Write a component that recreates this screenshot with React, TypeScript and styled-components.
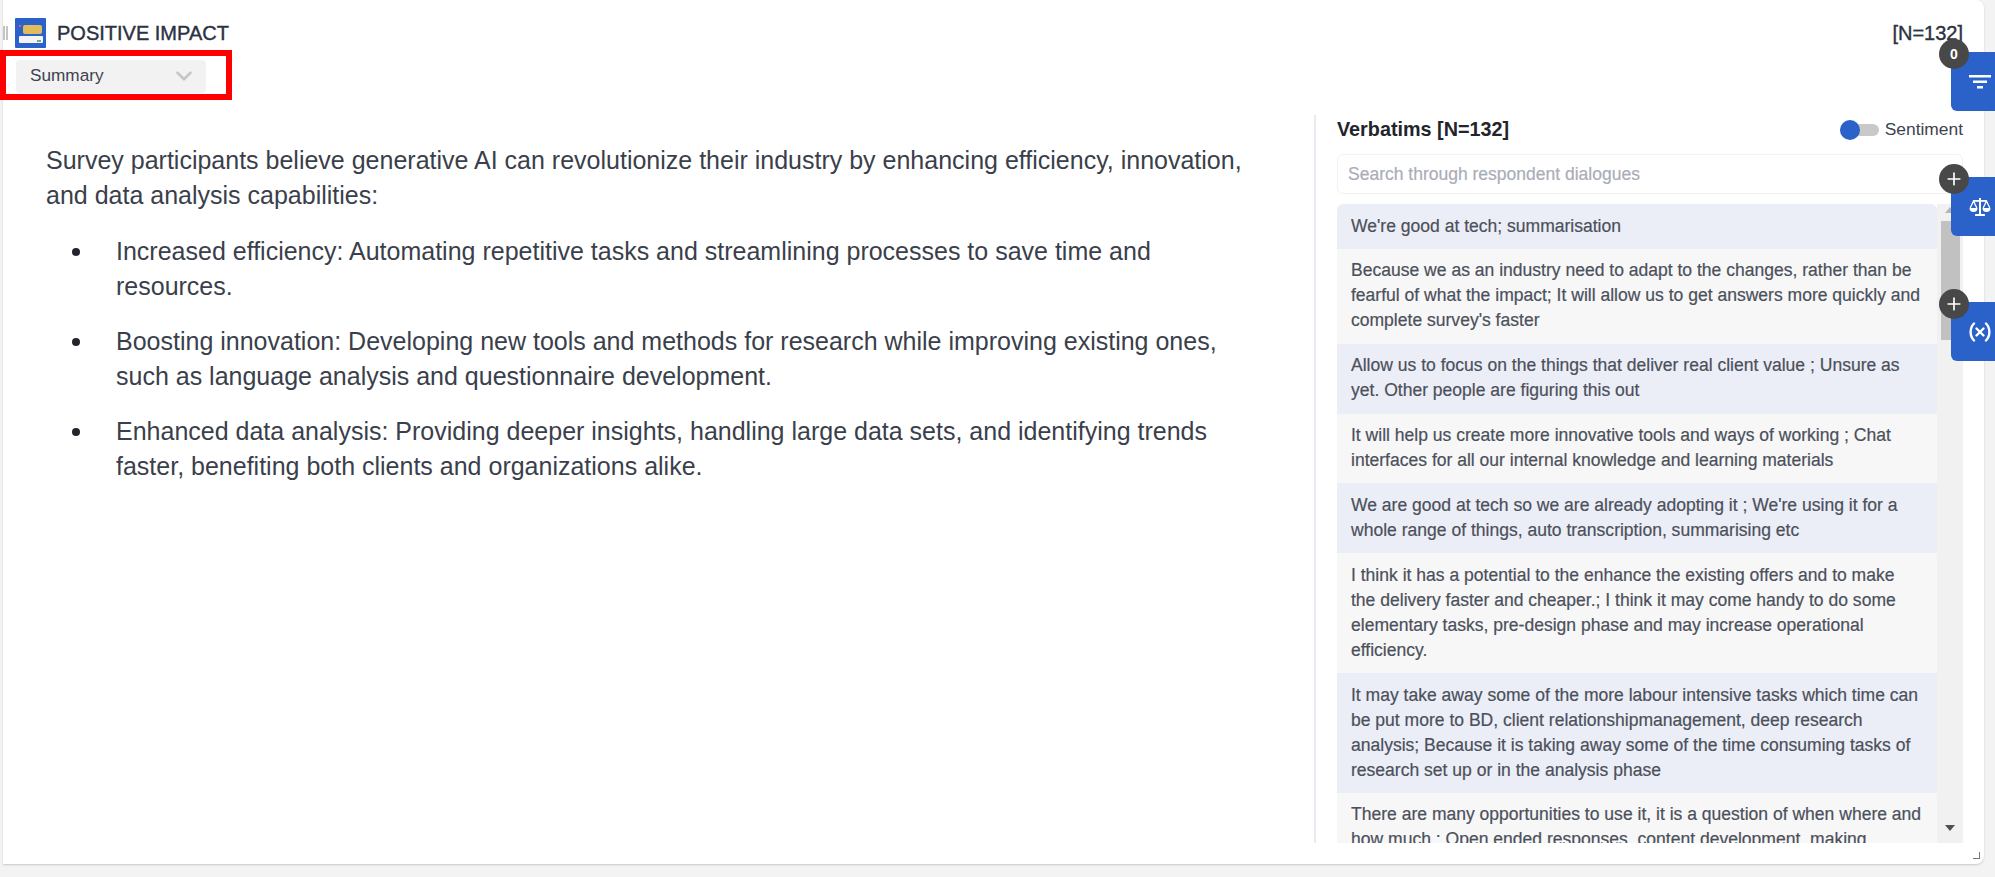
import React from "react";
import styled, { createGlobalStyle } from "styled-components";
import { ChevronDown, Plus } from "lucide-react";

const GlobalStyle = createGlobalStyle`
  html, body {
    margin: 0;
    padding: 0;
    background: #f3f3f3;
    font-family: "Liberation Sans", Arial, sans-serif;
    overflow: hidden;
  }
`;

const Page = styled.div`
  width: 1995px;
  height: 877px;
  box-sizing: border-box;
  padding-left: 3px;
  padding-right: 11px;
  padding-bottom: 13px;
  background: #f3f3f3;
  position: relative;
  overflow: hidden;
`;

const Card = styled.div`
  height: 100%;
  box-sizing: border-box;
  background: #fff;
  border-radius: 0 8px 8px 0;
  box-shadow: 0 1px 2px rgba(0, 0, 0, 0.18);
  padding: 18px 0 0 0;
  display: flex;
  flex-direction: column;
  position: relative;
`;

const Header = styled.div`
  display: flex;
  align-items: center;
  height: 30px;
  padding-right: 21px;
`;

const Grip = styled.div`
  width: 5px;
  height: 14px;
  margin-right: 7px;
  border-left: 2px solid #c4c4c4;
  border-right: 2px solid #c4c4c4;
  box-sizing: border-box;
`;

const Title = styled.h1`
  margin: 0 0 0 11px;
  font-size: 20px;
  font-weight: 400;
  color: #2c3242;
  -webkit-text-stroke: 0.4px #2c3242;
  flex: 1;
`;

const TotalCount = styled.span`
  font-size: 20px;
  color: #2c3242;
  -webkit-text-stroke: 0.4px #2c3242;
`;

const SelectRow = styled.div`
  padding: 12px 0 0 13px;
  height: 33px;
`;

const Select = styled.div`
  width: 190px;
  height: 33px;
  box-sizing: border-box;
  padding: 0 9px 2px 14px;
  background: #f2f2f2;
  border-radius: 4px;
  display: flex;
  align-items: center;
  justify-content: space-between;
  font-size: 17.2px;
  color: #3d4350;
`;

const Highlight = styled.div`
  position: absolute;
  left: -3px;
  top: 50px;
  width: 232px;
  height: 50px;
  border: 6px solid #ff0000;
  box-sizing: border-box;
  pointer-events: none;
`;

const Body = styled.div`
  flex: 1;
  min-height: 0;
  display: flex;
  margin-top: 22px;
  padding-bottom: 21px;
`;

const Summary = styled.div`
  width: 1311px;
  box-sizing: border-box;
  padding: 28px 70px 0 43px;
  font-size: 25px;
  line-height: 35px;
  color: #3a3f4b;
`;

const Intro = styled.p`
  margin: 0;
`;

const Points = styled.ul`
  margin: 21px 0 0;
  padding: 0 0 0 70px;
  list-style: none;
`;

const Point = styled.li`
  margin-bottom: 20px;
  position: relative;
  &::before {
    content: "";
    position: absolute;
    left: -44px;
    top: 14px;
    width: 8px;
    height: 8px;
    border-radius: 50%;
    background: #23242b;
  }
`;

const VerbatimPanel = styled.div`
  width: 649px;
  border-left: 2px solid #e9eaf2;
  padding: 0 0 0 21px;
  box-sizing: border-box;
  display: flex;
  flex-direction: column;
  min-height: 0;
`;

const PanelHeader = styled.div`
  display: flex;
  justify-content: space-between;
  align-items: center;
  height: 29px;
  padding-bottom: 10px;
`;

const PanelTitle = styled.h2`
  margin: 0;
  font-size: 19.8px;
  font-weight: 700;
  color: #23242b;
`;

const SentimentToggle = styled.div`
  display: flex;
  align-items: center;
  gap: 6px;
  font-size: 17.4px;
  color: #3d4350;
`;

const ToggleTrack = styled.div`
  width: 39px;
  height: 12px;
  background: #c9c9c9;
  border-radius: 6px;
  position: relative;
`;

const ToggleKnob = styled.div`
  position: absolute;
  left: 0;
  top: -4px;
  width: 20px;
  height: 20px;
  border-radius: 50%;
  background: #2a62c9;
`;

const SearchBox = styled.div`
  height: 40px;
  box-sizing: border-box;
  border: 1px solid #f2f2f2;
  border-radius: 6px;
  padding: 0 10px;
  display: flex;
  align-items: center;
  font-size: 17.5px;
  color: #a9adb8;
  -webkit-text-stroke: 0.2px #a9adb8;
`;

const ListWrap = styled.div`
  flex: 1;
  min-height: 0;
  margin-top: 10px;
  display: flex;
  overflow: hidden;
`;

const List = styled.div`
  width: 600px;
  flex-shrink: 0;
  overflow: hidden;
`;

const Row = styled.div<{ $shade: boolean }>`
  background: ${(p) => (p.$shade ? "#ebeef6" : "#f7f7f7")};
  padding: 9.5px 15px 10.35px 14px;
  font-size: 17.55px;
  line-height: 25px;
  color: #4b505b;
  -webkit-text-stroke: 0.2px #4b505b;
  &:first-child {
    border-radius: 6px 6px 0 0;
  }
`;

const Scrollbar = styled.div`
  width: 26px;
  background: #f1f1f1;
  position: relative;
`;

const ScrollThumb = styled.div`
  position: absolute;
  left: 4px;
  top: 17px;
  width: 19px;
  height: 119px;
  background: #c1c1c1;
`;

const ArrowUp = styled.div`
  position: absolute;
  left: 8px;
  top: 3px;
  border: 5px solid transparent;
  border-top: 0;
  border-bottom: 6px solid #b5b5b5;
`;

const ArrowDown = styled.div`
  position: absolute;
  left: 8px;
  bottom: 12px;
  border: 5.5px solid transparent;
  border-bottom: 0;
  border-top: 6px solid #505050;
`;

const ResizeCorner = styled.div`
  position: absolute;
  right: 4px;
  bottom: 5px;
  width: 6px;
  height: 6px;
  border-right: 1px solid #777;
  border-bottom: 1px solid #777;
`;

const SideTab = styled.div<{ $top: number }>`
  position: absolute;
  right: 0;
  top: ${(p) => p.$top}px;
  width: 44px;
  height: 59px;
  box-sizing: border-box;
  padding-left: 14px;
  background: #2a62c9;
  border-radius: 6px 0 0 6px;
  color: #fff;
  display: flex;
  align-items: center;
  justify-content: center;
`;

const TabBadge = styled.div`
  position: absolute;
  left: -12px;
  top: -13px;
  width: 30px;
  height: 30px;
  border-radius: 50%;
  background: #484848;
  color: #fff;
  font-size: 14px;
  font-weight: 700;
  display: flex;
  align-items: center;
  justify-content: center;
`;

const verbatims = [
  "We're good at tech; summarisation",
  "Because we as an industry need to adapt to the changes, rather than be fearful of what the impact; It will allow us to get answers more quickly and complete survey's faster",
  "Allow us to focus on the things that deliver real client value ; Unsure as yet. Other people are figuring this out",
  "It will help us create more innovative tools and ways of working ; Chat interfaces for all our internal knowledge and learning materials",
  "We are good at tech so we are already adopting it ; We're using it for a whole range of things, auto transcription, summarising etc",
  "I think it has a potential to the enhance the existing offers and to make the delivery faster and cheaper.; I think it may come handy to do some elementary tasks, pre-design phase and may increase operational efficiency.",
  "It may take away some of the more labour intensive tasks which time can be put more to BD, client relationshipmanagement, deep research analysis; Because it is taking away some of the time consuming tasks of research set up or in the analysis phase",
  "There are many opportunities to use it, it is a question of when where and how much ; Open ended responses, content development, making",
];

const points = [
  "Increased efficiency: Automating repetitive tasks and streamlining processes to save time and resources.",
  "Boosting innovation: Developing new tools and methods for research while improving existing ones, such as language analysis and questionnaire development.",
  "Enhanced data analysis: Providing deeper insights, handling large data sets, and identifying trends faster, benefiting both clients and organizations alike.",
];

function ReportIcon() {
  return (
    <svg width="31" height="30" viewBox="0 0 31 30">
      <rect width="31" height="30" rx="1" fill="#2a62c9" />
      <rect x="8" y="7" width="19" height="9" rx="2" fill="#e0bc5c" />
      <rect x="4" y="18" width="24" height="7" rx="1" fill="#f4f4f4" />
      <circle cx="5" cy="8" r="1.2" fill="#e25b6a" />
      <rect x="22" y="22" width="4" height="2" fill="#5fb48c" />
    </svg>
  );
}

function FilterIcon() {
  return (
    <svg width="22" height="14" viewBox="0 0 22 14" fill="#fff">
      <rect x="0" y="0" width="22" height="2.5" />
      <rect x="4" y="5.5" width="14" height="2.5" />
      <rect x="8" y="11" width="6" height="2.5" />
    </svg>
  );
}

function BalanceIcon() {
  return (
    <svg width="22" height="20" viewBox="0 0 22 20" fill="#fff">
      <rect x="10" y="1" width="2" height="16" />
      <rect x="6" y="17" width="10" height="2" rx="0.5" />
      <rect x="4" y="3" width="14" height="1.8" />
      <path d="M0.5 11 H8.5 A4 4 0 0 1 0.5 11 Z" />
      <path d="M13.5 11 H21.5 A4 4 0 0 1 13.5 11 Z" />
      <path d="M4.5 4 L1.2 11 M4.5 4 L7.8 11 M17.5 4 L14.2 11 M17.5 4 L20.8 11" stroke="#fff" strokeWidth="1.3" fill="none" />
    </svg>
  );
}

function VariableIcon() {
  return (
    <svg width="22" height="20" viewBox="0 0 22 20" fill="none" stroke="#fff" strokeWidth="2.4" strokeLinecap="round">
      <path d="M5 1.5 C0.5 6 0.5 14 5 18.5" />
      <path d="M17 1.5 C21.5 6 21.5 14 17 18.5" />
      <path d="M7.5 6.5 L14.5 13.5 M14.5 6.5 L7.5 13.5" />
    </svg>
  );
}

export default function App() {
  return (
    <Page>
      <GlobalStyle />
      <Card>
        <Header>
          <Grip />
          <ReportIcon />
          <Title>POSITIVE IMPACT</Title>
          <TotalCount>[N=132]</TotalCount>
        </Header>
        <SelectRow>
          <Select>
            Summary
            <ChevronDown size={26} color="#c6c6c6" strokeWidth={2.4} />
          </Select>
        </SelectRow>
        <Body>
          <Summary>
            <Intro>
              Survey participants believe generative AI can revolutionize their industry by enhancing efficiency, innovation, and data analysis capabilities:
            </Intro>
            <Points>
              {points.map((point) => (
                <Point key={point}>{point}</Point>
              ))}
            </Points>
          </Summary>
          <VerbatimPanel>
            <PanelHeader>
              <PanelTitle>Verbatims [N=132]</PanelTitle>
              <SentimentToggle>
                <ToggleTrack>
                  <ToggleKnob />
                </ToggleTrack>
                Sentiment
              </SentimentToggle>
            </PanelHeader>
            <SearchBox>Search through respondent dialogues</SearchBox>
            <ListWrap>
              <List>
                {verbatims.map((text, i) => (
                  <Row key={text} $shade={i % 2 === 0}>
                    {text}
                  </Row>
                ))}
              </List>
              <Scrollbar>
                <ArrowUp />
                <ScrollThumb />
                <ArrowDown />
              </Scrollbar>
            </ListWrap>
          </VerbatimPanel>
        </Body>
        <ResizeCorner />
        <Highlight />
      </Card>
      <SideTab $top={52}>
        <TabBadge>0</TabBadge>
        <FilterIcon />
      </SideTab>
      <SideTab $top={177}>
        <TabBadge>
          <Plus size={20} />
        </TabBadge>
        <BalanceIcon />
      </SideTab>
      <SideTab $top={302}>
        <TabBadge>
          <Plus size={20} />
        </TabBadge>
        <VariableIcon />
      </SideTab>
    </Page>
  );
}
